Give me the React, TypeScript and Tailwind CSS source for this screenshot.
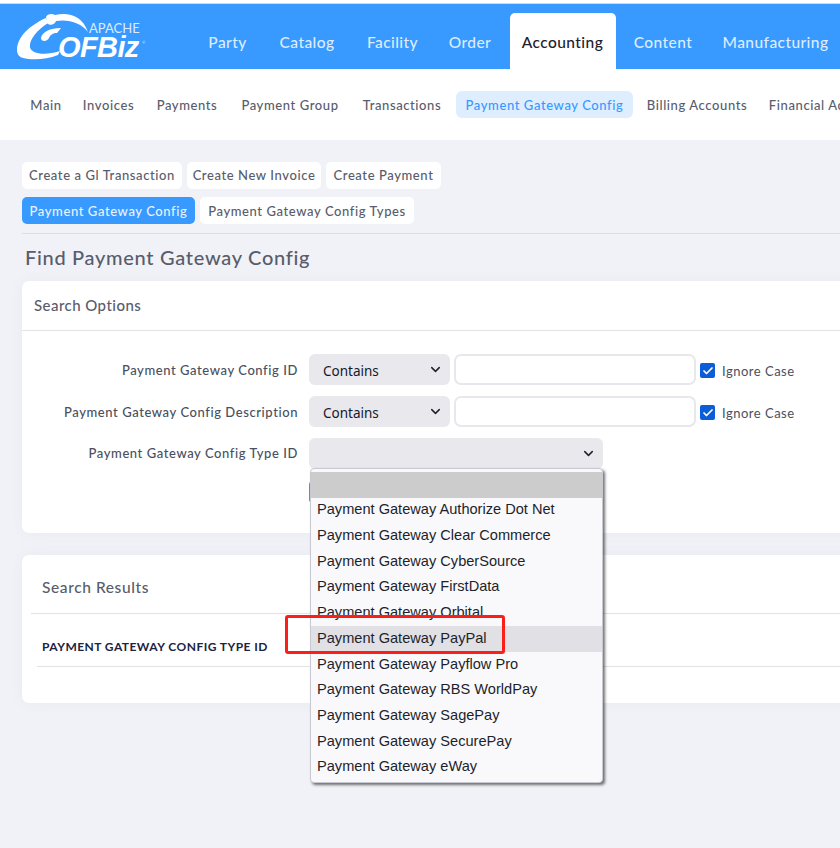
import React from 'react'
import { ChevronDown, Check } from 'lucide-react'

const TABS = [
  { label: 'Party', width: 'w-[64px]' },
  { label: 'Catalog', width: 'w-[82px]' },
  { label: 'Facility', width: 'w-[76px]' },
  { label: 'Order', width: 'w-[66px]' },
  { label: 'Accounting', width: 'w-[106px]', active: true },
  { label: 'Content', width: 'w-[82px]' },
  { label: 'Manufacturing', width: 'w-[130px]' },
]

const SUB_NAV = [
  { label: 'Main', width: 'w-[48px]' },
  { label: 'Invoices', width: 'w-[67px]' },
  { label: 'Payments', width: 'w-[80px]' },
  { label: 'Payment Group', width: 'w-[116px]' },
  { label: 'Transactions', width: 'w-[98px]' },
  { label: 'Payment Gateway Config', width: 'w-[177px]', active: true },
  { label: 'Billing Accounts', width: 'w-[118px]' },
  { label: 'Financial Accounts', width: 'w-[133px]' },
]

const GATEWAYS = [
  'Payment Gateway Authorize Dot Net',
  'Payment Gateway Clear Commerce',
  'Payment Gateway CyberSource',
  'Payment Gateway FirstData',
  'Payment Gateway Orbital',
  'Payment Gateway PayPal',
  'Payment Gateway Payflow Pro',
  'Payment Gateway RBS WorldPay',
  'Payment Gateway SagePay',
  'Payment Gateway SecurePay',
  'Payment Gateway eWay',
]

function Logo() {
  return (
    <svg width="150" height="65" viewBox="0 4 150 65" className="shrink-0">
      <g fill="#fff">
        <path d="M17 50 C17 37 30 25 46 18 L48 23 C37 30 29 40 30 47 C31 54 45 56 60 51 L58 55 C46 60 31 60 23 58 C19 57 17 54 17 50 Z" />
        <path d="M46 17 C47 14 52 13 55 15 C68 12 82 15 88 32 C81 23 69 19 56 21 C55 25 49 26 47 23 Z" />
        <path d="M41 38 C42 32 50 28 61 28 L57 33 C53 33 50 35 49 38 C47 42 41 42 41 38 Z" />
      </g>
      <text x="89" y="33" fill="#dcecff" fontSize="13" fontFamily="Lato, sans-serif">APACHE</text>
      <text x="58" y="57" fill="#fff" fontSize="29" fontWeight="700" fontStyle="italic" fontFamily="'Liberation Sans', sans-serif" letterSpacing="-0.6">OFBiz</text>
      <text x="142" y="44" fill="#dcecff" fontSize="4" fontFamily="Lato, sans-serif">®</text>
    </svg>
  )
}

function Chip({ label, active, width, low }: { label: string; active?: boolean; width: string; low?: boolean }) {
  return (
    <a className={`${width} h-[27px] flex items-center justify-center rounded-[5px] text-[13px] font-medium tracking-[0.6px] ${low ? 'pt-[2px]' : ''} ${active ? 'bg-[#3899ff] text-[#e8f3ff]' : 'bg-white text-[#585c6b]'}`}>
      {label}
    </a>
  )
}

function FakeSelect({ width, value }: { width: string; value?: string }) {
  return (
    <div className={`${width} h-[31px] shrink-0 flex items-center justify-between pl-[14px] pr-[7px] bg-[#e8e8ed] rounded-[6px] text-[13.5px] text-[#15192a] font-['Noto_Sans',sans-serif]`}>
      <span className="pt-[3px]">{value}</span>
      <ChevronDown size={15} strokeWidth={2.4} className="text-[#20232c]" />
    </div>
  )
}

function SearchRow({ label }: { label: string }) {
  return (
    <div className="flex items-center h-[31px]">
      <label className="w-[276px] shrink-0 pt-[2px] text-right text-[13px] font-medium tracking-[0.58px] text-[#4a4f60]">{label}</label>
      <div className="ml-[11px] flex items-center">
        <FakeSelect width="w-[141px]" value="Contains" />
        <div className="ml-[4px] w-[242px] h-[31px] bg-white border-2 border-[#e8e8ec] rounded-[7px]" />
        <div className="ml-[4px] mt-[2px] w-[15px] h-[15px] bg-[#0b5ed7] rounded-[2px] flex items-center justify-center">
          <Check size={12} strokeWidth={3.5} className="text-white" />
        </div>
        <span className="ml-[7px] mt-[4px] text-[13px] tracking-[0.5px] text-[#4a4f60]">Ignore Case</span>
      </div>
    </div>
  )
}

export default function App() {
  return (
    <div className="relative w-[840px] h-[848px] overflow-hidden bg-[#f0f2f7] font-['Lato',sans-serif]">
      <div className="h-[3px] bg-white" />
      <div className="h-px bg-[#d6d6d6]" />

      {/* top bar */}
      <header className="h-[65px] bg-[#3899ff] flex items-end">
        <Logo />
        <nav className="ml-[45.5px] flex gap-[6.5px] shrink-0">
          {TABS.map((tab) => (
            <a
              key={tab.label}
              className={`${tab.width} h-[56px] shrink-0 pt-[4px] flex items-center justify-center text-[15.5px] font-medium tracking-[0.42px] rounded-t-[5px] ${tab.active ? 'bg-white text-[#1d2130]' : 'text-[#dcecff]'}`}
            >
              {tab.label}
            </a>
          ))}
        </nav>
      </header>

      {/* section nav */}
      <div className="h-[71px] bg-white flex items-center pl-[22px] gap-[5px] whitespace-nowrap">
        {SUB_NAV.map((item) => (
          <a
            key={item.label}
            className={`${item.width} h-[27px] shrink-0 pt-[2px] flex items-center justify-center rounded-[6px] text-[13px] font-medium tracking-[0.6px] ${item.active ? 'bg-[#deeeff] text-[#3899ff]' : 'text-[#585c6b]'}`}
          >
            {item.label}
          </a>
        ))}
      </div>

      <main className="pl-[22px] pt-[22px] w-[900px]">
        <div className="flex gap-[5px]">
          <Chip label="Create a Gl Transaction" width="w-[160px]" />
          <Chip label="Create New Invoice" width="w-[134px]" />
          <Chip label="Create Payment" width="w-[115px]" />
        </div>
        <div className="flex gap-[5px] mt-[8px]">
          <Chip label="Payment Gateway Config" width="w-[173px]" active low />
          <Chip label="Payment Gateway Config Types" width="w-[214px]" low />
        </div>
        <div className="mt-[9px] h-px bg-[#dcdde1]" />

        <h1 className="mt-[10px] ml-[3px] h-[37px] text-[20px] leading-[26px] font-medium tracking-[0.7px] text-[#585c6b]">Find Payment Gateway Config</h1>

        {/* search options */}
        <section className="h-[252px] bg-white rounded-tl-[7px] rounded-bl-[7px] shadow-[0_0_14px_rgba(80,90,120,0.05)]">
          <div className="h-[50px] pl-[12px] flex items-center border-b border-[#e2e3e7] text-[15px] font-medium tracking-[0.45px] text-[#585c6b]">Search Options</div>
          <div className="pt-[23px] flex flex-col gap-[11px]">
            <SearchRow label="Payment Gateway Config ID" />
            <SearchRow label="Payment Gateway Config Description" />
            <div className="flex items-center h-[30px]">
              <label className="w-[276px] shrink-0 pt-[2px] text-right text-[13px] font-medium tracking-[0.58px] text-[#4a4f60]">Payment Gateway Config Type ID</label>
              <div className="ml-[11px]">
                <FakeSelect width="w-[294px]" />
              </div>
            </div>
            <div className="ml-[287px] mt-[2px] w-[60px] h-[22px] bg-[#3899ff] rounded-[4px]" />
          </div>
        </section>

        {/* search results */}
        <section className="mt-[22px] h-[148px] bg-white rounded-tl-[7px] rounded-bl-[7px] shadow-[0_0_14px_rgba(80,90,120,0.05)] pl-[9px]">
          <div className="h-[59px] pt-[8px] pl-[11px] flex items-center border-b border-[#e2e3e7] text-[15.5px] font-medium tracking-[0.6px] text-[#585c6b]">Search Results</div>
          <div className="ml-[6px] h-[53px] pt-[14px] pl-[5px] flex items-center border-b border-[#e2e3e7] text-[12px] font-bold tracking-[0.45px] uppercase text-[#1b2440]">Payment Gateway Config Type ID</div>
        </section>
      </main>

      {/* open select list */}
      <div className="absolute left-[310px] top-[468px] w-[293px] h-[315px] pt-[3px] bg-[#f9f9fb] border border-[#c9c9d2] rounded-[4px] shadow-[2px_2px_3px_rgba(0,0,0,0.55)] font-['Liberation_Sans',sans-serif] text-[14.6px] text-[#1d1f2b]">
        <div className="h-[26px] bg-[#cccccc]" />
        {GATEWAYS.map((name) => (
          <div key={name} className={`h-[25.7px] pl-[6px] flex items-center whitespace-nowrap ${name === 'Payment Gateway PayPal' ? 'bg-[#e0e0e5]' : ''}`}>
            <span className="-mt-[1px]">{name}</span>
          </div>
        ))}
      </div>

      {/* annotation */}
      <div className="absolute left-[285px] top-[615px] w-[220px] h-[39px] border-[3px] border-[#fb1f1a] rounded-[3px]" />
    </div>
  )
}
